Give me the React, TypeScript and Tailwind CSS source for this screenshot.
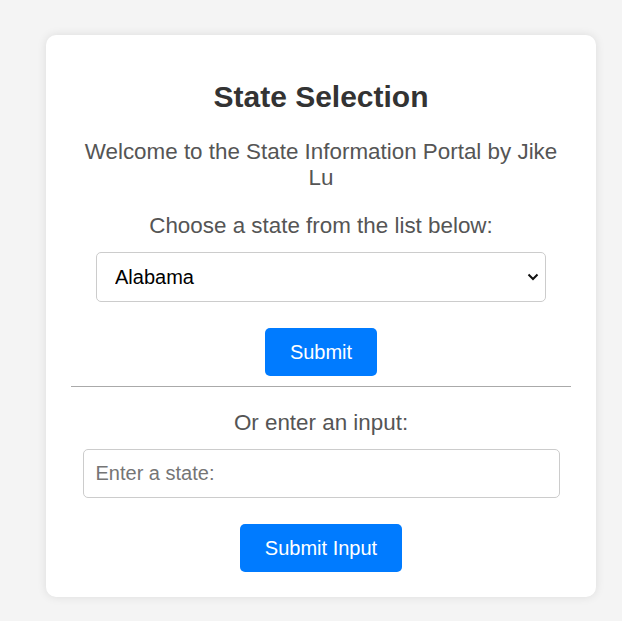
import { useState } from 'react';

const states = [
  'Alabama', 'Alaska', 'Arizona', 'Arkansas', 'California', 'Colorado', 'Connecticut',
  'Delaware', 'Florida', 'Georgia', 'Hawaii', 'Idaho', 'Illinois', 'Indiana', 'Iowa',
];

export default function App() {
  const [selected, setSelected] = useState('Alabama');
  const [text, setText] = useState('');

  return (
    <div className="min-h-screen bg-[#f4f4f4] pt-[35px] pl-[46px] font-['Liberation_Sans',Arial,sans-serif]">
      <div className="w-[550px] bg-white rounded-[10px] shadow-[0_0_10px_rgba(0,0,0,0.1)] px-[25px] pt-[25px] pb-[25px] flex flex-col items-center text-center">
        <h1 className="mt-5 text-[30px] leading-[34px] font-bold text-[#333]">State Selection</h1>
        <p className="mt-[25px] text-[22.4px] leading-[26px] text-[#555]">
          Welcome to the State Information Portal by Jike Lu
        </p>
        <p className="mt-[22px] text-[22.4px] leading-[26px] text-[#555]">Choose a state from the list below:</p>

        <div className="relative mt-[13px] w-[450px]">
          <select
            value={selected}
            onChange={(e) => setSelected(e.target.value)}
            className="appearance-none w-full h-[50px] pl-[18px] pr-10 text-[20px] text-black bg-white border border-[#ccc] rounded-[5px] outline-none"
          >
            {states.map((s) => (
              <option key={s} value={s}>{s}</option>
            ))}
          </select>
          <svg
            className="pointer-events-none absolute right-[7px] top-[21px]"
            width="12"
            height="8"
            viewBox="0 0 12 8"
            fill="none"
            stroke="#111"
            strokeWidth="2"
          >
            <path d="M1.5 1.5 L6 6 L10.5 1.5" />
          </svg>
        </div>

        <button className="mt-[26px] h-12 px-[25px] bg-[#007bff] text-white text-[20px] rounded-[5px]">
          Submit
        </button>

        <hr className="mt-[10px] w-full border-0 border-t border-[#aaa]" />

        <p className="mt-[23px] text-[22.4px] leading-[26px] text-[#555]">Or enter an input:</p>

        <input
          value={text}
          onChange={(e) => setText(e.target.value)}
          placeholder="Enter a state:"
          className="mt-[13px] w-[477px] h-[49px] px-3 text-[20px] text-black bg-white border border-[#ccc] rounded-[5px] outline-none placeholder:text-[#757575]"
        />

        <button className="mt-[26px] h-12 px-[25px] bg-[#007bff] text-white text-[20px] rounded-[5px]">
          Submit Input
        </button>
      </div>
    </div>
  );
}
